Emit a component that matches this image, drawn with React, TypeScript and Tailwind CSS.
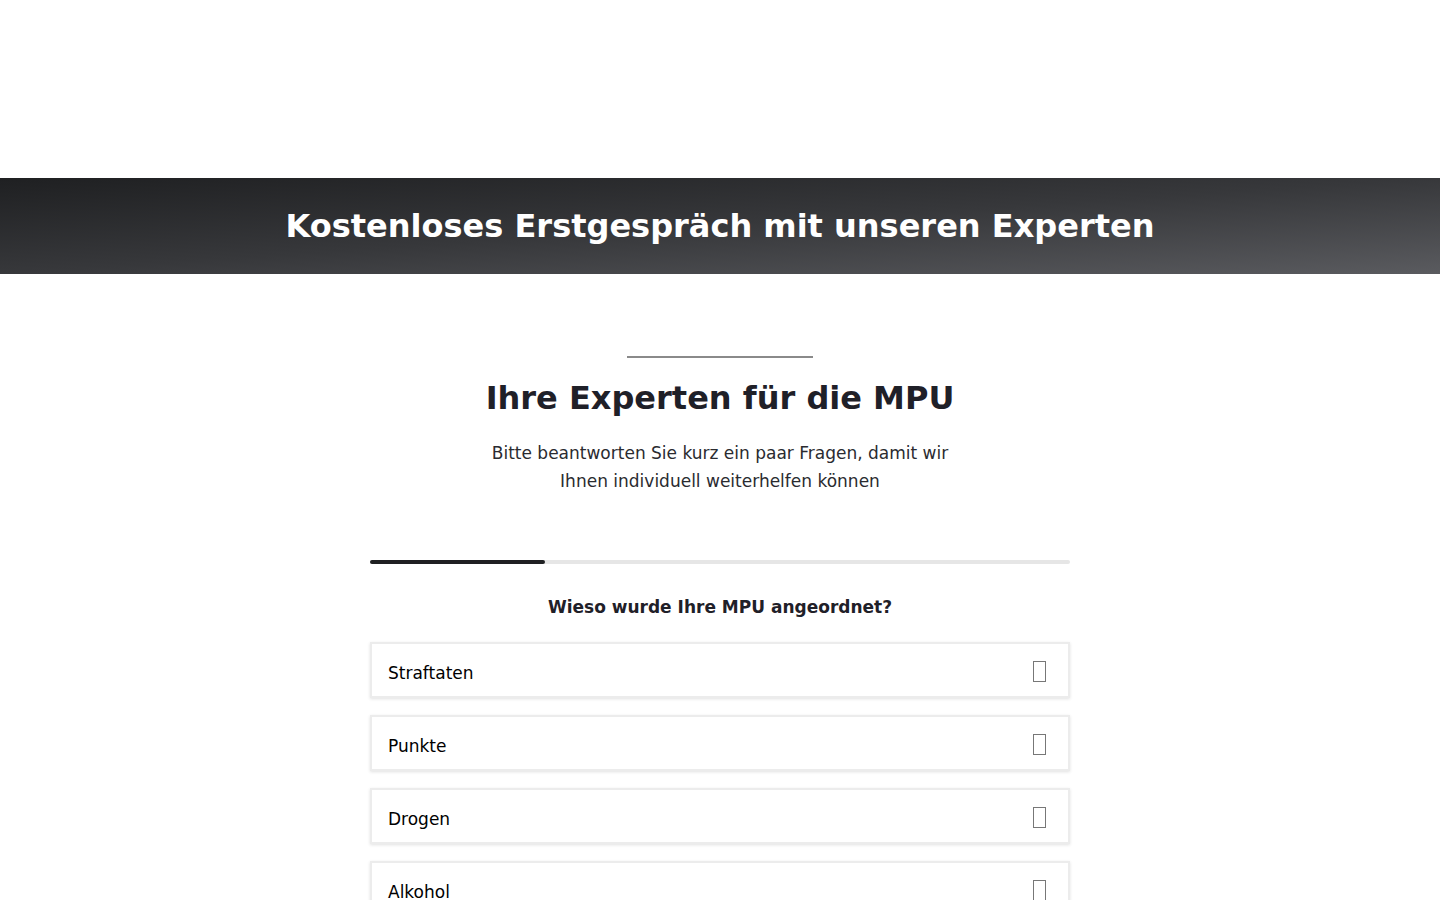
const options = ['Straftaten', 'Punkte', 'Drogen', 'Alkohol']

function MissingGlyph() {
  // the original shows an icon font glyph that failed to load
  return <span className="mt-[4px] inline-block h-[21px] w-[13px] border-[1.5px] border-[#777]" />
}

export default function App() {
  return (
    <div className="min-h-screen bg-white font-['DejaVu_Sans',sans-serif] text-[#1f2028]">
      {/* empty header area */}
      <div className="h-[178px]" />

      <div className="flex h-[96px] items-center justify-center bg-gradient-to-br from-[#1f2022] via-[#37383b] to-[#5a5b5f]">
        <h1 className="text-[32px] font-bold text-white">Kostenloses Erstgespräch mit unseren Experten</h1>
      </div>

      <div className="flex flex-col items-center pt-[82px]">
        <div className="h-[2px] w-[186px] bg-[#8a8a8a]" />
        <h2 className="mt-[20px] text-[32px] font-bold leading-[40px] text-[#1f2028]">Ihre Experten für die MPU</h2>
        <p className="mt-[21px] max-w-[470px] text-center text-[17px] leading-[28px] text-[#2a2b30]">
          Bitte beantworten Sie kurz ein paar Fragen, damit wir Ihnen individuell weiterhelfen können
        </p>

        <div className="mt-[65px] w-[700px]">
          <div className="h-[4px] w-full rounded-full bg-[#e6e6e6]">
            <div className="h-full w-1/4 rounded-full bg-[#1f2022]" />
          </div>

          <div className="mt-[31px] text-center text-[17px] font-bold text-[#1f2028]">Wieso wurde Ihre MPU angeordnet?</div>

          <div className="mt-[21px] flex flex-col gap-[17px]">
            {options.map((o) => (
              <button
                key={o}
                className="flex h-[56px] w-full items-center justify-between border-2 border-[#ececec] bg-white pl-[16px] pr-[22px] text-left text-[17px] text-black shadow-[0_1px_3px_rgba(0,0,0,0.12)]"
              >
                <span className="pt-[8px]">{o}</span>
                <MissingGlyph />
              </button>
            ))}
          </div>
        </div>
      </div>
    </div>
  )
}
